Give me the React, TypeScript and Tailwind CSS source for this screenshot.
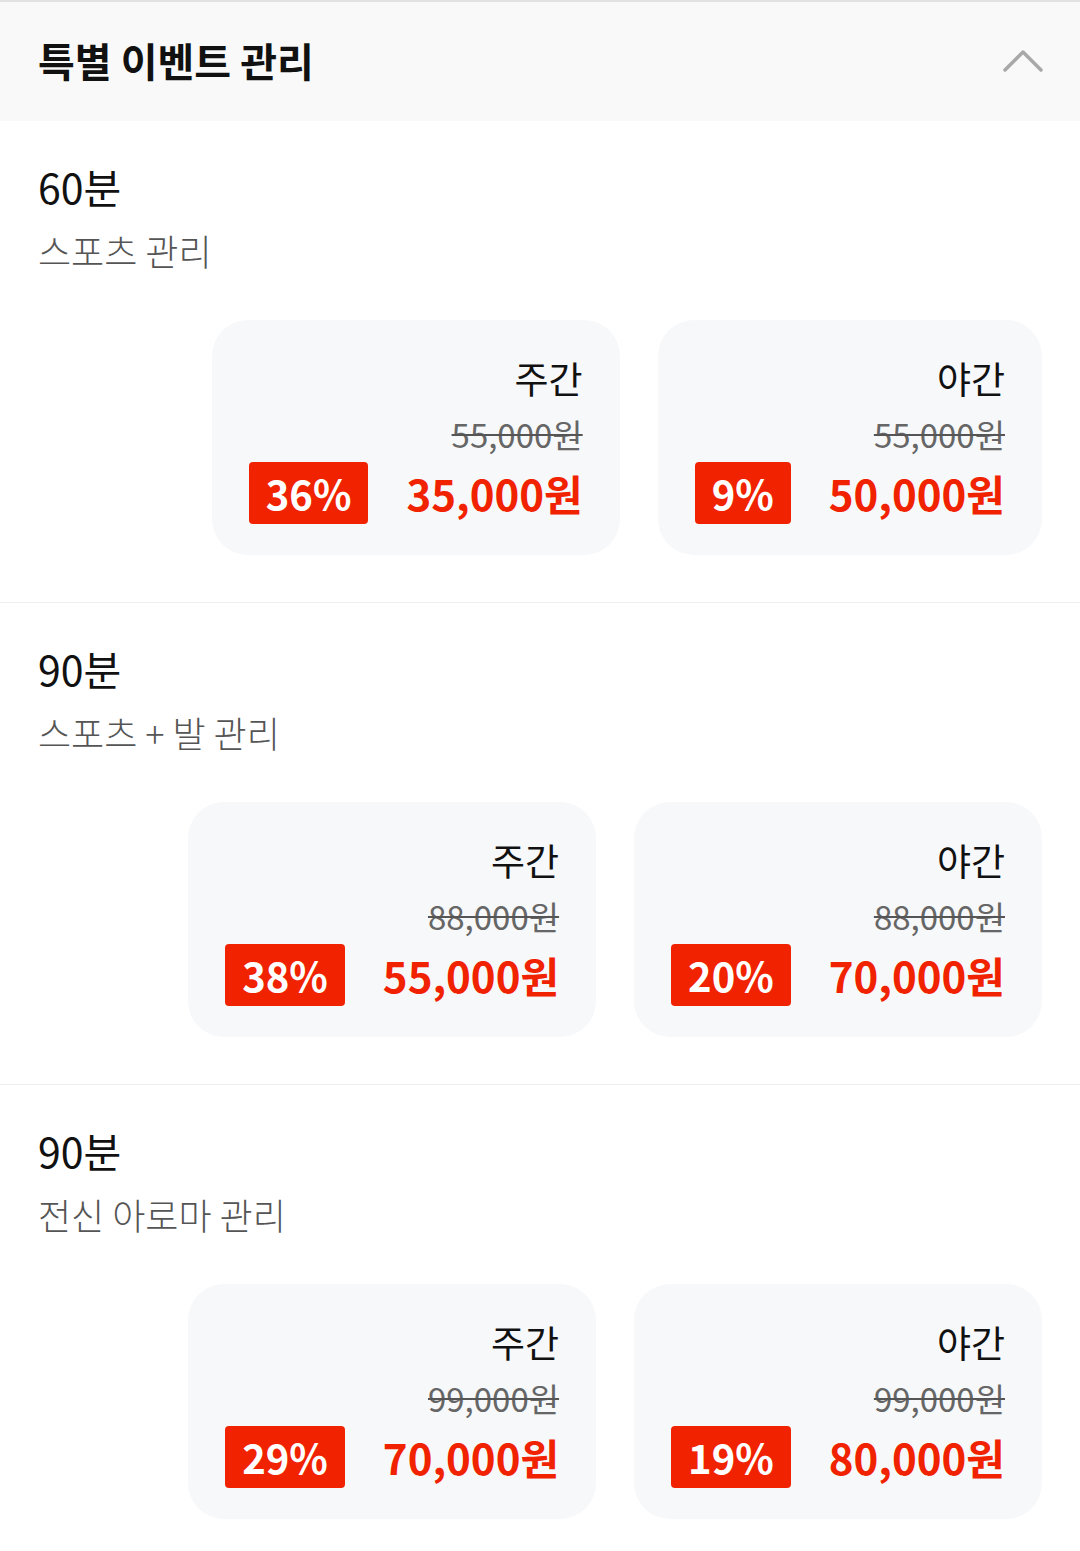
import React from 'react';

interface PriceOption {
    label: string;
    original: string;
    discount: string;
    price: string;
}

interface Course {
    duration: string;
    name: string;
    options: PriceOption[];
}

const courses: Course[] = [
    {
        duration: '60분',
        name: '스포츠 관리',
        options: [
            { label: '주간', original: '55,000원', discount: '36%', price: '35,000원' },
            { label: '야간', original: '55,000원', discount: '9%', price: '50,000원' },
        ],
    },
    {
        duration: '90분',
        name: '스포츠 + 발 관리',
        options: [
            { label: '주간', original: '88,000원', discount: '38%', price: '55,000원' },
            { label: '야간', original: '88,000원', discount: '20%', price: '70,000원' },
        ],
    },
    {
        duration: '90분',
        name: '전신 아로마 관리',
        options: [
            { label: '주간', original: '99,000원', discount: '29%', price: '70,000원' },
            { label: '야간', original: '99,000원', discount: '19%', price: '80,000원' },
        ],
    },
];

const PriceCard: React.FC<{ option: PriceOption }> = ({ option }) => (
    <div className="bg-[#f7f8fa] rounded-[36px] pt-[32px] pb-[31px] pl-[37px] pr-[37px] flex flex-col items-end">
        <div className="text-[37px] leading-[52px] text-[#111]">{option.label}</div>
        <div className="mt-[8px] text-[33px] leading-[44px] text-[#666] line-through decoration-[2px] decoration-[#555]">
            {option.original}
        </div>
        <div className="mt-[6px] flex items-center gap-[38px]">
            <span className="h-[62px] px-[17px] flex items-center bg-[#f02200] text-white text-[40px] font-bold rounded-[4px]">
                {option.discount}
            </span>
            <span className="text-[42px] leading-[62px] font-bold text-[#f02200]">{option.price}</span>
        </div>
    </div>
);

const App: React.FC = () => {
    return (
        <div
            className="w-[1080px] min-h-[1551px] bg-white"
            style={{ fontFamily: '"Noto Sans CJK KR", "Noto Sans", sans-serif' }}
        >
            <div className="h-[121px] bg-[#f9f9f9] border-t-2 border-[#e2e2e2] flex items-center justify-between pl-[38px] pr-[36px] pb-[4px]">
                <h1 className="text-[40px] font-bold text-[#111] leading-none">특별 이벤트 관리</h1>
                <svg width="42" height="28" viewBox="0 0 42 28" fill="none">
                    <polyline points="3,24 21,6 39,24" stroke="#a8a8a8" strokeWidth="3.5" strokeLinecap="round" strokeLinejoin="round" />
                </svg>
            </div>

            {courses.map((course, i) => (
                <div
                    key={i}
                    className={`pt-[37px] pb-[47px] px-[38px] ${i < courses.length - 1 ? 'border-b border-[#eeeeee]' : ''}`}
                >
                    <div className="text-[41px] leading-[56px] text-[#111]">{course.duration}</div>
                    <div className="mt-[11px] text-[36px] leading-[50px] font-light text-[#555]">{course.name}</div>
                    <div className="mt-[45px] flex justify-end gap-[38px]">
                        {course.options.map((opt, j) => (
                            <PriceCard key={j} option={opt} />
                        ))}
                    </div>
                </div>
            ))}
        </div>
    );
};

export default App;
